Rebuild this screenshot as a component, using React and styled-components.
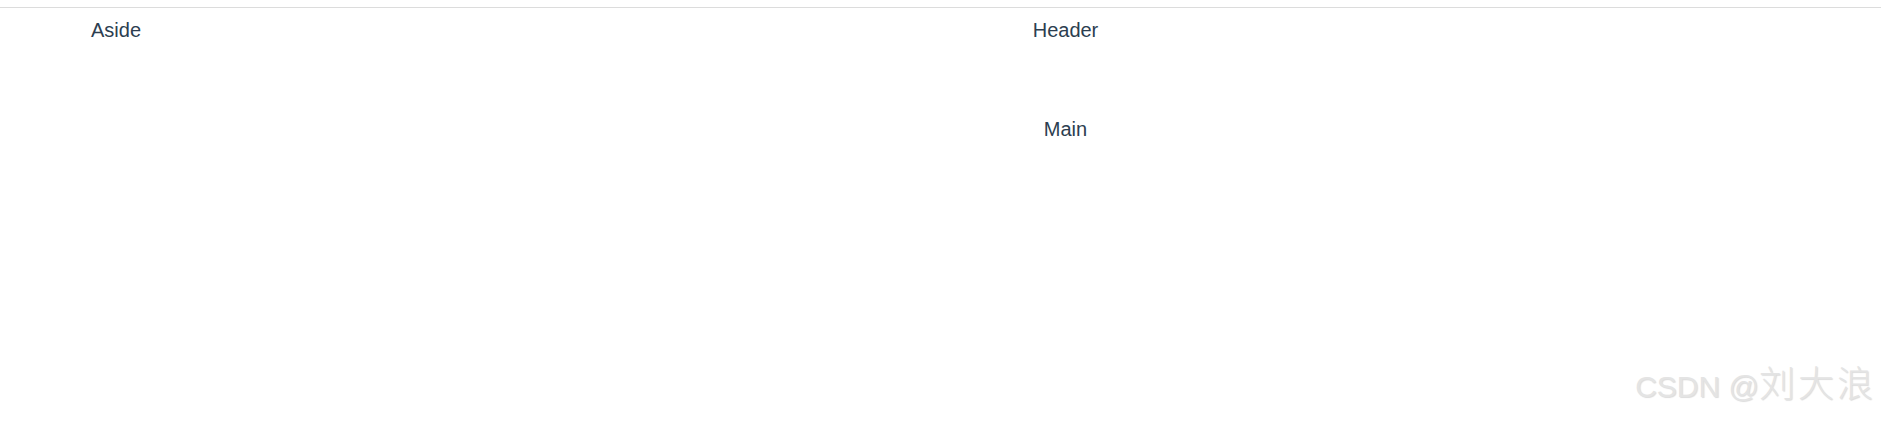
import React from "react";
import styled, { createGlobalStyle } from "styled-components";

const GlobalStyle = createGlobalStyle`
  html, body {
    margin: 0;
    padding: 0;
    background: #fff;
  }
  body {
    font-family: "Liberation Sans", Arial, sans-serif;
    color: #2c3e50;
  }
`;

const Page = styled.div`
  position: relative;
  height: 424px;
  padding-top: 7px;
  box-sizing: border-box;
  overflow: hidden;
`;

const Container = styled.div`
  display: flex;
  border-top: 1px solid #dcdcdc;
  height: 416px;
`;

const Aside = styled.aside`
  width: 250px;
  flex-shrink: 0;
  padding: 11px 0 0 91px;
  box-sizing: border-box;
  font-size: 20px;
  line-height: 23px;
`;

const Column = styled.div`
  flex: 1;
  display: flex;
  flex-direction: column;
  text-align: center;
`;

const Header = styled.header`
  height: 75px;
  padding-top: 11px;
  box-sizing: border-box;
  font-size: 20px;
  line-height: 23px;
`;

const Main = styled.main`
  padding-top: 35px;
  font-size: 20px;
  line-height: 23px;
`;

const Watermark = styled.div`
  position: absolute;
  right: 5px;
  bottom: 22px;
  display: flex;
  align-items: baseline;
  line-height: 1;
  font-family: "Liberation Sans", Arial, sans-serif;
  font-size: 30px;
  color: #e4e4e4;
  text-shadow: 1px 1px 1px rgba(0, 0, 0, 0.14);
  white-space: nowrap;
`;

const WatermarkName = styled.span`
  font-family: "Noto Sans CJK SC", sans-serif;
  font-weight: 300;
  font-size: 36px;
  letter-spacing: 3px;
`;

export default function App() {
  return (
    <Page>
      <GlobalStyle />
      <Container>
        <Aside>Aside</Aside>
        <Column>
          <Header>Header</Header>
          <Main>Main</Main>
        </Column>
      </Container>
      <Watermark>
        CSDN&nbsp;@<WatermarkName>刘大浪</WatermarkName>
      </Watermark>
    </Page>
  );
}
